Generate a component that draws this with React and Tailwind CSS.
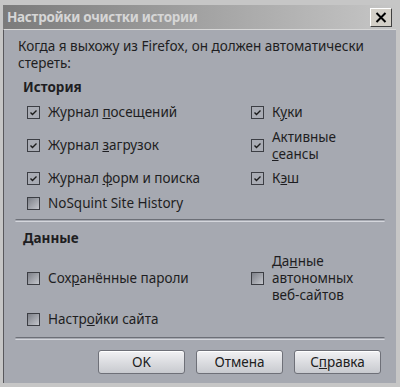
import React from 'react';

const font = { fontFamily: '"Noto Sans", "Open Sans", sans-serif' };

const Check = ({ checked }) => (
  <div
    className={`w-[13px] h-[13px] shrink-0 border border-[#3c3e44] flex items-center justify-center ${
      checked ? 'bg-[#a9acb4]' : 'bg-gradient-to-br from-[#7d8088] to-[#c4c6cc]'
    }`}
  >
    {checked && (
      <svg width="9" height="9" viewBox="0 0 9 9">
        <path d="M1.5 4.5 L3.5 6.5 L7.5 2.5" stroke="#1c1c1c" strokeWidth="1.4" fill="none" />
      </svg>
    )}
  </div>
);

const Option = ({ checked, children, className = '' }) => (
  <div className={`flex items-center gap-[8px] ${className}`}>
    <Check checked={checked} />
    <div className="leading-[17px]">{children}</div>
  </div>
);

const Separator = () => (
  <div className="mx-[11px] h-[3px] border-t border-[#6c6f77] border-b border-b-[#d4d6dc] rounded-full" />
);

const Button = ({ children }) => (
  <button className="w-[87px] h-[24px] rounded-[3px] border border-[#6e7078] bg-gradient-to-b from-[#f2f2f4] via-[#dcdde1] to-[#c8cacf] text-[#202020] shadow-[inset_0_1px_0_#ffffff]">
    {children}
  </button>
);

export default function App() {
  return (
    <div
      style={font}
      className="w-[400px] h-[387px] bg-[#c6c6c6] pt-[5px] pl-[3px] pr-[4px] pb-[4px] flex flex-col text-[13.5px] text-[#1e1e22]"
    >
      <div className="h-[24px] shrink-0 flex items-center justify-between pl-[4px] pr-[4px] bg-gradient-to-r from-[#7b7b7b] via-[#a2a2a2] to-[#c6c6c6]">
        <span className="font-bold text-[13.5px] tracking-[-0.3px] text-[#d6d6d6]">Настройки очистки истории</span>
        <div className="w-[22px] h-[19px] bg-[#d4d0c8] border border-t-white border-l-white border-r-[#404040] border-b-[#404040] flex items-center justify-center">
          <svg width="12" height="11" viewBox="0 0 12 11">
            <path d="M1.5 1 L10.5 10 M10.5 1 L1.5 10" stroke="#000" strokeWidth="2" />
          </svg>
        </div>
      </div>
      <div className="flex-1 bg-[#a6a9b1] border-t border-[#d8d8d8] border-l border-l-[#58585c] flex flex-col">
        <p className="pl-[14px] pt-[8px] leading-[17px]">
          Когда я выхожу из Firefox, он должен автоматически
          <br />
          стереть:
        </p>

        <div className="pl-[19px] pt-[7px] font-bold leading-[17px]">История</div>
        <div className="grid grid-cols-[224px_1fr] pl-[23px]">
          <div className="flex flex-col">
            <Option checked className="h-[33px]">Журнал <u>п</u>осещений</Option>
            <Option checked className="h-[33px]">Журнал <u>з</u>агрузок</Option>
            <Option checked className="h-[33px]">Журнал <u>ф</u>орм и поиска</Option>
            <Option className="h-[17px] mt-[0px]">NoSquint Site History</Option>
          </div>
          <div className="flex flex-col">
            <Option checked className="h-[33px]">К<u>у</u>ки</Option>
            <Option checked className="h-[33px]">
              Активные
              <br />
              <u>с</u>еансы
            </Option>
            <Option checked className="h-[33px]">К<u>э</u>ш</Option>
          </div>
        </div>

        <div className="mt-[7px]">
          <Separator />
        </div>

        <div className="pl-[19px] pt-[8px] font-bold leading-[17px]">Данные</div>
        <div className="grid grid-cols-[224px_1fr] pl-[23px]">
          <div className="flex flex-col">
            <Option className="h-[41px] mt-[11px]">Сох<u>р</u>анённые пароли</Option>
            <Option className="h-[41px]">Настр<u>о</u>йки сайта</Option>
          </div>
          <div className="flex flex-col">
            <Option className="h-[51px] mt-[6px]">
              Да<u>н</u>ные
              <br />
              автономных
              <br />
              веб-сайтов
            </Option>
          </div>
        </div>

        <div className="mt-[-3px]">
          <Separator />
        </div>

        <div className="flex justify-end gap-[11px] pr-[15px] pt-[10px]">
          <Button>OK</Button>
          <Button>Отмена</Button>
          <Button>
            С<u>п</u>равка
          </Button>
        </div>
      </div>
    </div>
  );
}
